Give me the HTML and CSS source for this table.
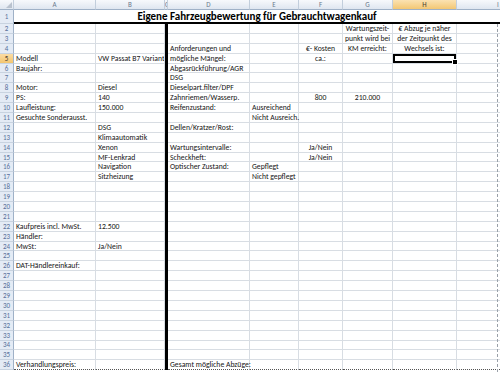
FILE: index.html
```html
<!DOCTYPE html>
<html lang="de">
<head>
<meta charset="utf-8">
<title>Eigene Fahrzeugbewertung</title>
<link rel="stylesheet" href="styles.css">
</head>
<body>
<div class="sheet">
<table class="grid">
<colgroup>
<col class="w-rh"><col class="w-a"><col class="w-b"><col class="w-c"><col class="w-d"><col class="w-e"><col class="w-f"><col class="w-g"><col class="w-h"><col class="w-i">
</colgroup>
<thead>
<tr class="colhead"><th class="corner"></th><th>A</th><th>B</th><th class="hc">C</th><th>D</th><th>E</th><th>F</th><th>G</th><th class="hl">H</th><th class="hi">I</th></tr>
</thead>
<tbody>
<tr class="r1"><th>1</th><td colspan="9" class="title">Eigene Fahrzeugbewertung für Gebrauchtwagenkauf</td></tr>
<tr><th>2</th><td></td><td></td><td class="c"></td><td></td><td></td><td></td><td class="ctr">Wartungszeit-</td><td class="ctr">€ Abzug je näher</td><td></td></tr>
<tr><th>3</th><td></td><td></td><td class="c"></td><td></td><td></td><td></td><td class="ctr">punkt wird bei</td><td class="ctr">der Zeitpunkt des</td><td></td></tr>
<tr><th>4</th><td></td><td></td><td class="c"></td><td>Anforderungen und</td><td></td><td class="ctr">€- Kosten</td><td class="ctr">KM erreicht:</td><td class="ctr">Wechsels ist:</td><td></td></tr>
<tr><th class="hl">5</th><td>Modell</td><td class="clip">VW Passat B7 Variant</td><td class="c"></td><td>mögliche Mängel:</td><td></td><td class="ctr">ca.:</td><td></td><td class="sel"></td><td></td></tr>
<tr><th>6</th><td>Baujahr:</td><td></td><td class="c"></td><td>Abgasrückführung/AGR</td><td></td><td></td><td></td><td></td><td></td></tr>
<tr><th>7</th><td></td><td></td><td class="c"></td><td>DSG</td><td></td><td></td><td></td><td></td><td></td></tr>
<tr><th>8</th><td>Motor:</td><td>Diesel</td><td class="c"></td><td>Dieselpart.filter/DPF</td><td></td><td></td><td></td><td></td><td></td></tr>
<tr><th>9</th><td>PS:</td><td>140</td><td class="c"></td><td>Zahnriemen/Wasserp.</td><td></td><td class="ctr">800</td><td class="ctr">210.000</td><td></td><td></td></tr>
<tr><th>10</th><td>Laufleistung:</td><td>150.000</td><td class="c"></td><td>Reifenzustand:</td><td>Ausreichend</td><td></td><td></td><td></td><td></td></tr>
<tr><th>11</th><td>Gesuchte Sonderausst.</td><td></td><td class="c"></td><td></td><td>Nicht Ausreich.</td><td></td><td></td><td></td><td></td></tr>
<tr><th>12</th><td></td><td>DSG</td><td class="c"></td><td>Dellen/Kratzer/Rost:</td><td></td><td></td><td></td><td></td><td></td></tr>
<tr><th>13</th><td></td><td>Klimaautomatik</td><td class="c"></td><td></td><td></td><td></td><td></td><td></td><td></td></tr>
<tr><th>14</th><td></td><td>Xenon</td><td class="c"></td><td>Wartungsintervalle:</td><td></td><td class="ctr">Ja/Nein</td><td></td><td></td><td></td></tr>
<tr><th>15</th><td></td><td>MF-Lenkrad</td><td class="c"></td><td>Scheckheft:</td><td></td><td class="ctr">Ja/Nein</td><td></td><td></td><td></td></tr>
<tr><th>16</th><td></td><td>Navigation</td><td class="c"></td><td>Optischer Zustand:</td><td>Gepflegt</td><td></td><td></td><td></td><td></td></tr>
<tr><th>17</th><td></td><td>Sitzheizung</td><td class="c"></td><td></td><td>Nicht gepflegt</td><td></td><td></td><td></td><td></td></tr>
<tr><th>18</th><td></td><td></td><td class="c"></td><td></td><td></td><td></td><td></td><td></td><td></td></tr>
<tr><th>19</th><td></td><td></td><td class="c"></td><td></td><td></td><td></td><td></td><td></td><td></td></tr>
<tr><th>20</th><td></td><td></td><td class="c"></td><td></td><td></td><td></td><td></td><td></td><td></td></tr>
<tr><th>21</th><td></td><td></td><td class="c"></td><td></td><td></td><td></td><td></td><td></td><td></td></tr>
<tr><th>22</th><td>Kaufpreis incl. MwSt.</td><td>12.500</td><td class="c"></td><td></td><td></td><td></td><td></td><td></td><td></td></tr>
<tr><th>23</th><td>Händler:</td><td></td><td class="c"></td><td></td><td></td><td></td><td></td><td></td><td></td></tr>
<tr><th>24</th><td>MwSt:</td><td>Ja/Nein</td><td class="c"></td><td></td><td></td><td></td><td></td><td></td><td></td></tr>
<tr><th>25</th><td></td><td></td><td class="c"></td><td></td><td></td><td></td><td></td><td></td><td></td></tr>
<tr><th>26</th><td>DAT-Händlereinkauf:</td><td></td><td class="c"></td><td></td><td></td><td></td><td></td><td></td><td></td></tr>
<tr><th>27</th><td></td><td></td><td class="c"></td><td></td><td></td><td></td><td></td><td></td><td></td></tr>
<tr><th>28</th><td></td><td></td><td class="c"></td><td></td><td></td><td></td><td></td><td></td><td></td></tr>
<tr><th>29</th><td></td><td></td><td class="c"></td><td></td><td></td><td></td><td></td><td></td><td></td></tr>
<tr><th>30</th><td></td><td></td><td class="c"></td><td></td><td></td><td></td><td></td><td></td><td></td></tr>
<tr><th>31</th><td></td><td></td><td class="c"></td><td></td><td></td><td></td><td></td><td></td><td></td></tr>
<tr><th>32</th><td></td><td></td><td class="c"></td><td></td><td></td><td></td><td></td><td></td><td></td></tr>
<tr><th>33</th><td></td><td></td><td class="c"></td><td></td><td></td><td></td><td></td><td></td><td></td></tr>
<tr><th>34</th><td></td><td></td><td class="c"></td><td></td><td></td><td></td><td></td><td></td><td></td></tr>
<tr><th>35</th><td></td><td></td><td class="c"></td><td></td><td></td><td></td><td></td><td></td><td></td></tr>
<tr class="last"><th>36</th><td>Verhandlungspreis:</td><td></td><td class="c"></td><td>Gesamt mögliche Abzüge:</td><td></td><td></td><td></td><td></td><td></td></tr>
</tbody>
</table>
<div class="pagebreak"></div>
</div>
</body>
</html>
```
FILE: styles.css
```css
* { box-sizing: border-box; }
html, body { margin: 0; padding: 0; background: #fff; }
body {
  width: 500px;
  height: 372px;
  overflow: hidden;
  font-family: Carlito, Lato, "Liberation Sans", sans-serif;
}
.sheet {
  position: relative;
  width: 500px;
  height: 372px;
  overflow: hidden;
}
.grid {
  table-layout: fixed;
  border-collapse: separate;
  border-spacing: 0;
  width: 520px;
}
.w-rh { width: 14px; }
.w-a { width: 82px; }
.w-b { width: 69px; }
.w-c { width: 3px; }
.w-d { width: 82px; }
.w-e { width: 49px; }
.w-f { width: 44px; }
.w-g { width: 50px; }
.w-h { width: 64px; }
.w-i { width: 63px; }

.colhead { height: 10px; }
.colhead th {
  background: linear-gradient(#f7f9fc, #dfe6f0);
  border-right: 1px solid #c2cedc;
  border-bottom: 1px solid #9fb1c7;
  font-size: 7px;
  line-height: 8px;
  font-weight: normal;
  color: #6c7a8e;
  padding: 0;
  overflow: hidden;
  text-align: center;
}
.colhead th.hl {
  background: linear-gradient(#fbe2b2, #f3c774);
  color: #4a4030;
}
.colhead th.hi { padding-left: 20px; }
.colhead th.corner { position: relative; }
.colhead th.corner::after {
  content: "";
  position: absolute;
  right: 1px;
  bottom: 1px;
  border-left: 6px solid transparent;
  border-bottom: 6px solid #b9c2ce;
}

tbody tr { height: 9.9px; }
tbody tr.r1 { height: 14px; }

tbody th {
  background: #e4ebf5;
  border-right: 1px solid #9fb1c7;
  border-bottom: 1px solid #c8d3e0;
  font-size: 7px;
  line-height: 7px;
  font-weight: normal;
  color: #57709a;
  padding: 0;
  text-align: center;
  overflow: hidden;
}
tbody th.hl {
  background: linear-gradient(#fbdca4, #f3c56f);
  color: #4a4030;
}

td {
  border-right: 1px solid #d8dde3;
  border-bottom: 1px solid #d8dde3;
  padding: 0 2px;
  font-size: 7.7px;
  line-height: 7px;
  color: #151515;
  white-space: nowrap;
  overflow: visible;
  vertical-align: middle;
}
td.clip { overflow: hidden; }
td.ctr { text-align: center; }
td.c {
  background: #000;
  border-right-color: #000;
  border-bottom-color: #000;
  padding: 0;
}
td.title {
  font-size: 11px;
  font-weight: bold;
  text-align: center;
  padding-right: 22px;
  border-bottom: 2px solid #000;
  border-right: none;
  color: #000;
  line-height: 11px;
}
td.sel {
  position: relative;
  box-shadow: inset 0 0 0 2px #000;
}
td.sel::after {
  content: "";
  position: absolute;
  right: -2px;
  bottom: -2px;
  width: 4px;
  height: 4px;
  background: #000;
  border: 1px solid #fff;
}
tr.last td { border-bottom: 1px dotted #555; }
tr.last td.c { border-bottom: 1px solid #000; }

.pagebreak {
  position: absolute;
  left: 497px;
  top: 24px;
  bottom: 0;
  border-left: 1px dashed #9aa0a8;
}
```
